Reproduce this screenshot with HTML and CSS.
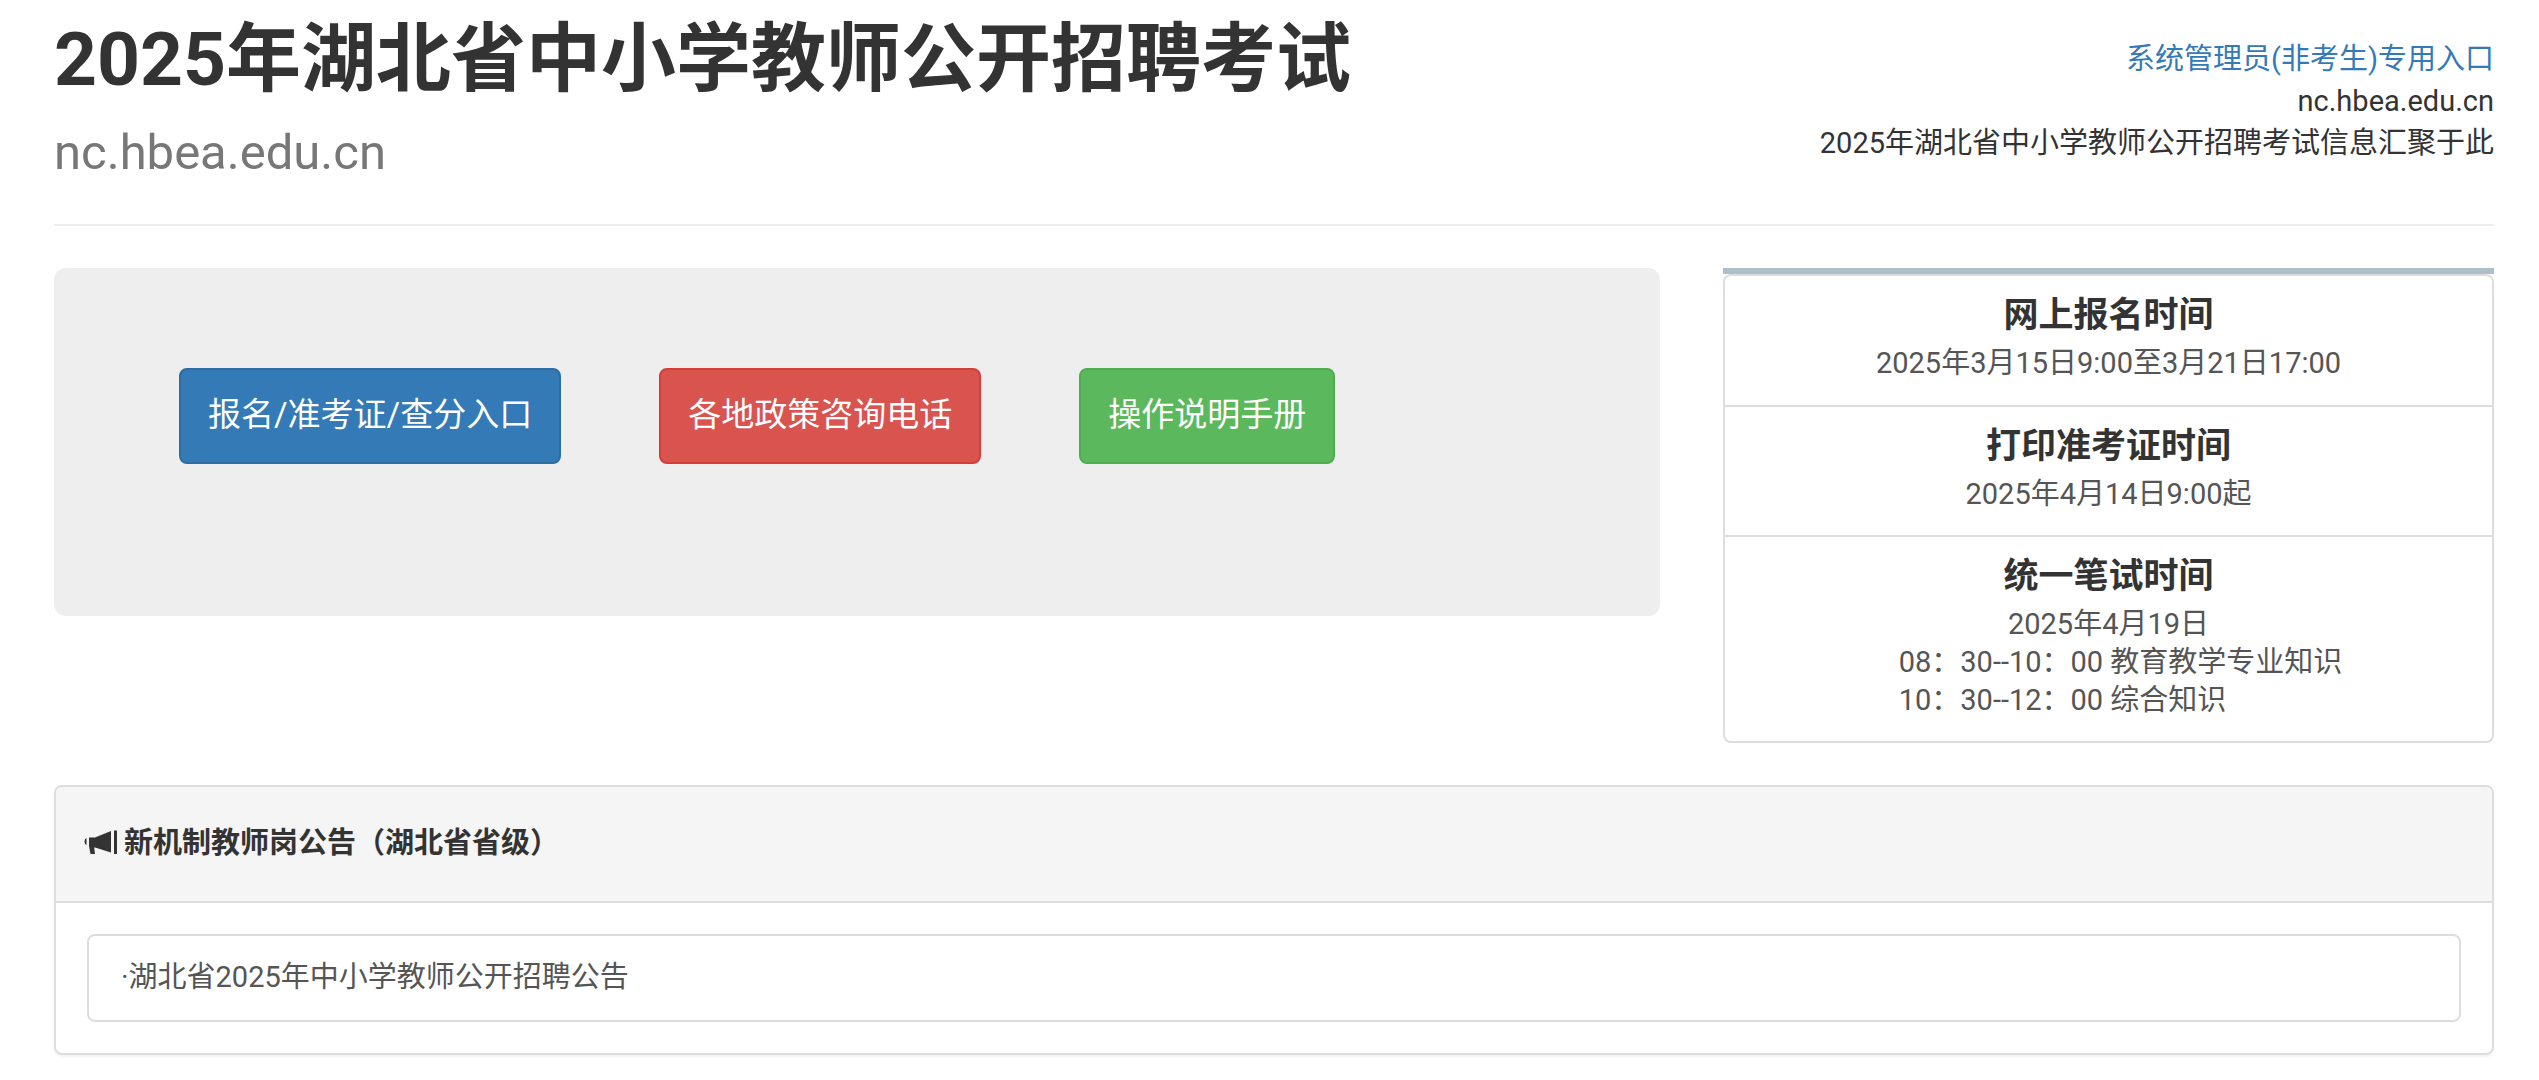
FILE: index.html
```html
<!DOCTYPE html>
<html lang="zh-CN">
<head>
<meta charset="utf-8">
<meta name="viewport" content="width=device-width, initial-scale=1">
<title>2025年湖北省中小学教师公开招聘考试</title>
<link rel="stylesheet" href="styles.css">
</head>
<body>
<div class="container">
  <header class="page-header">
    <div>
      <h1 class="title">2025年湖北省中小学教师公开招聘考试</h1>
      <p class="subtitle">nc.hbea.edu.cn</p>
    </div>
    <address class="site-info">
      <a href="#admin">系统管理员(非考生)专用入口</a>
      <span>nc.hbea.edu.cn</span>
      <span>2025年湖北省中小学教师公开招聘考试信息汇聚于此</span>
    </address>
  </header>

  <main>
    <div class="intro">
      <section class="jumbotron">
        <button type="button" class="btn btn-primary">报名/准考证/查分入口</button>
        <button type="button" class="btn btn-danger">各地政策咨询电话</button>
        <button type="button" class="btn btn-success">操作说明手册</button>
      </section>
      <aside class="schedule">
        <section class="schedule-item">
          <h2>网上报名时间</h2>
          <p>2025年3月15日9:00至3月21日17:00</p>
        </section>
        <section class="schedule-item">
          <h2>打印准考证时间</h2>
          <p>2025年4月14日9:00起</p>
        </section>
        <section class="schedule-item">
          <h2>统一笔试时间</h2>
          <p>2025年4月19日</p>
          <ul class="sessions">
            <li>08：30--10：00 教育教学专业知识</li>
            <li>10：30--12：00 综合知识</li>
          </ul>
        </section>
      </aside>
    </div>

    <section class="panel">
      <h2 class="panel-heading">
        <svg class="icon" viewBox="0 0 34 26" aria-hidden="true">
          <path d="M0.500 11.500Q0.500 8.500 2.500 8v7Q0.500 14.500 0.500 11.500zM5 7.500h6L27 1v21.500L11 17.500h-.8l.8 6.500H6.500L5 16zM30 .5h3V24h-3z"/>
        </svg>
        <span>新机制教师岗公告（湖北省省级）</span>
      </h2>
      <div class="panel-body">
        <a class="notice" href="#notice">·湖北省2025年中小学教师公开招聘公告</a>
      </div>
    </section>
  </main>
</div>
</body>
</html>
```

FILE: styles.css
```css
* {
  box-sizing: border-box;
}

body {
  margin: 0;
  background: #fff;
  color: #333;
  font: 29px/42px Roboto, "Noto Sans CJK SC", sans-serif;
}

h1, h2, p, ul {
  margin: 0;
  padding: 0;
}

.container {
  padding: 0 45px 24px 54px;
}

.page-header {
  display: flex;
  justify-content: space-between;
  align-items: flex-start;
  padding: 18px 0 42px;
  border-bottom: 2px solid #eee;
}

.title {
  font-size: 75px;
  line-height: 82px;
  font-weight: 700;
}

.subtitle {
  padding-top: 24px;
  color: #777;
  font-size: 49px;
  line-height: 58px;
}

.site-info {
  display: flex;
  flex-direction: column;
  align-items: flex-end;
  padding-top: 20px;
  font-style: normal;
}

.site-info a {
  color: #337ab7;
  text-decoration: none;
}

.intro {
  display: grid;
  grid-template-columns: 1606fr 771fr;
  gap: 63px;
  align-items: start;
  padding: 42px 0;
}

.jumbotron {
  display: flex;
  flex-wrap: wrap;
  gap: 98px;
  padding: 100px 125px 152px;
  border-radius: 12px;
  background: #eee;
}

.btn {
  padding: 22px 27px 24px;
  border: 2px solid;
  border-radius: 8px;
  color: #fff;
  font: inherit;
  font-size: 33px;
  line-height: 46px;
  cursor: pointer;
}

.btn-primary {
  background: #337ab7;
  border-color: #2e6da4;
}

.btn-danger {
  background: #d9534f;
  border-color: #d43f3a;
}

.btn-success {
  background: #5cb85c;
  border-color: #4cae4c;
}

.schedule {
  border-top: 6px solid #adc0ca;
}

.schedule-item {
  padding: 21px 30px 22px;
  border: 2px solid #ddd;
  border-top-width: 0;
  color: #555;
  line-height: 38px;
  text-align: center;
}

.schedule-item:first-child {
  padding-bottom: 23px;
  border-top-width: 2px;
  border-radius: 8px 8px 0 0;
}

.schedule-item:last-child {
  border-radius: 0 0 8px 8px;
}

.schedule-item h2 {
  padding-bottom: 9px;
  color: #333;
  font-size: 35px;
  line-height: 38px;
}

.sessions {
  display: inline-block;
  padding-left: 24px;
  list-style: none;
  text-align: left;
  vertical-align: top;
}

.panel {
  border: 2px solid #ddd;
  border-radius: 8px;
  box-shadow: 0 2px 2px rgba(0, 0, 0, .05);
}

.panel-heading {
  display: flex;
  align-items: center;
  gap: 6px;
  padding: 35px 28px 37px;
  border-bottom: 2px solid #ddd;
  border-radius: 6px 6px 0 0;
  background: #f5f5f5;
  font-size: 29px;
  line-height: 42px;
}

.icon {
  width: 34px;
  height: 26px;
  fill: #333;
}

.panel-body {
  padding: 31px;
}

.notice {
  display: block;
  padding: 20px 32px 22px;
  border: 2px solid #ddd;
  border-radius: 8px;
  color: #555;
  text-decoration: none;
}
```
